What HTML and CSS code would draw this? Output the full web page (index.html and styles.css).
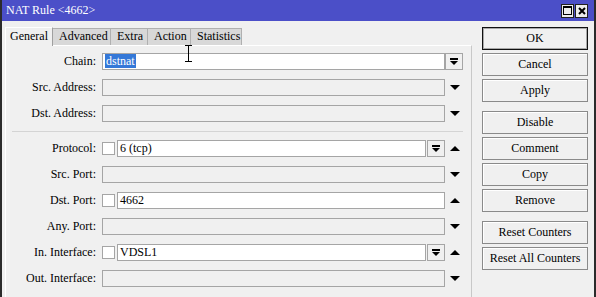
FILE: index.html
```html
<!DOCTYPE html>
<html lang="en">
<head>
    <meta charset="UTF-8">
    <title>NAT Rule &lt;4662&gt;</title>
    <link rel="stylesheet" href="styles.css">
</head>
<body>
    <div class="window">
        <div class="titlebar">
            <span class="title">NAT Rule &lt;4662&gt;</span>
            <div class="title-btns">
                <span class="tbtn">
                    <svg width="9" height="9" viewBox="0 0 9 9"><rect x="0.5" y="0.5" width="8" height="8" fill="none" stroke="#000"/><rect x="0" y="0" width="9" height="2" fill="#000"/></svg>
                </span>
                <span class="tbtn">
                    <svg width="8" height="8" viewBox="0 0 8 8"><path d="M1 1 L7 7 M7 1 L1 7" stroke="#000" stroke-width="2"/></svg>
                </span>
            </div>
        </div>

        <div class="content">
            <div class="main">
                <div class="tabs">
                    <div class="tab active">General</div>
                    <div class="tab">Advanced</div>
                    <div class="tab">Extra</div>
                    <div class="tab">Action</div>
                    <div class="tab">Statistics</div>
                </div>

                <div class="panel">
                    <div class="row">
                        <span class="label">Chain:</span>
                        <div class="field">
                            <div class="box"><span class="selected">dstnat</span></div>
                        </div>
                        <div class="slot">
                            <span class="dd wide"><svg width="8" height="8" viewBox="0 0 8 8"><rect x="0" y="0" width="8" height="2"/><polygon points="0,3 8,3 4,7"/></svg></span>
                        </div>
                    </div>
                    <div class="row">
                        <span class="label">Src. Address:</span>
                        <div class="field"><div class="box off"></div></div>
                        <div class="slot"><svg class="arrow" width="10" height="5" viewBox="0 0 10 5"><polygon points="0,0 10,0 5,5"/></svg></div>
                    </div>
                    <div class="row">
                        <span class="label">Dst. Address:</span>
                        <div class="field"><div class="box off"></div></div>
                        <div class="slot"><svg class="arrow" width="10" height="5" viewBox="0 0 10 5"><polygon points="0,0 10,0 5,5"/></svg></div>
                    </div>

                    <div class="separator"></div>

                    <div class="row">
                        <span class="label">Protocol:</span>
                        <div class="field">
                            <span class="check"></span>
                            <div class="box">6 (tcp)</div>
                            <span class="dd"><svg width="8" height="8" viewBox="0 0 8 8"><rect x="0" y="0" width="8" height="2"/><polygon points="0,3 8,3 4,7"/></svg></span>
                        </div>
                        <div class="slot"><svg class="arrow" width="10" height="5" viewBox="0 0 10 5"><polygon points="5,0 10,5 0,5"/></svg></div>
                    </div>
                    <div class="row">
                        <span class="label">Src. Port:</span>
                        <div class="field"><div class="box off"></div></div>
                        <div class="slot"><svg class="arrow" width="10" height="5" viewBox="0 0 10 5"><polygon points="0,0 10,0 5,5"/></svg></div>
                    </div>
                    <div class="row">
                        <span class="label">Dst. Port:</span>
                        <div class="field">
                            <span class="check"></span>
                            <div class="box">4662</div>
                        </div>
                        <div class="slot"><svg class="arrow" width="10" height="5" viewBox="0 0 10 5"><polygon points="5,0 10,5 0,5"/></svg></div>
                    </div>
                    <div class="row">
                        <span class="label">Any. Port:</span>
                        <div class="field"><div class="box off"></div></div>
                        <div class="slot"><svg class="arrow" width="10" height="5" viewBox="0 0 10 5"><polygon points="0,0 10,0 5,5"/></svg></div>
                    </div>
                    <div class="row">
                        <span class="label">In. Interface:</span>
                        <div class="field">
                            <span class="check"></span>
                            <div class="box">VDSL1</div>
                            <span class="dd"><svg width="8" height="8" viewBox="0 0 8 8"><rect x="0" y="0" width="8" height="2"/><polygon points="0,3 8,3 4,7"/></svg></span>
                        </div>
                        <div class="slot"><svg class="arrow" width="10" height="5" viewBox="0 0 10 5"><polygon points="5,0 10,5 0,5"/></svg></div>
                    </div>
                    <div class="row">
                        <span class="label">Out. Interface:</span>
                        <div class="field"><div class="box off"></div></div>
                        <div class="slot"><svg class="arrow" width="10" height="5" viewBox="0 0 10 5"><polygon points="0,0 10,0 5,5"/></svg></div>
                    </div>
                </div>
            </div>

            <div class="actions">
                <button class="btn default">OK</button>
                <button class="btn">Cancel</button>
                <button class="btn group-end">Apply</button>
                <button class="btn">Disable</button>
                <button class="btn">Comment</button>
                <button class="btn">Copy</button>
                <button class="btn group-end">Remove</button>
                <button class="btn">Reset Counters</button>
                <button class="btn">Reset All Counters</button>
            </div>
        </div>

        <!-- mouse pointer over the form -->
        <svg class="ibeam" width="9" height="17" viewBox="0 0 9 17">
            <path d="M1 0.5 H8 M4.5 0.5 V16.5 M1 16.5 H8" stroke="#000" stroke-width="1" fill="none"/>
        </svg>
    </div>
</body>
</html>
```

FILE: styles.css
```css
* {
    margin: 0;
    padding: 0;
    box-sizing: border-box;
}

body {
    font-family: "Liberation Serif", "DejaVu Serif", serif;
    font-size: 12px;
    color: #000;
    background: #f0f0f0;
}

.window {
    position: relative;
    width: 596px;
    height: 297px;
    overflow: hidden;
    background: #f0f0f0;
    border-left: 2px solid #2b2b2b;
    border-right: 2px solid #2b2b2b;
}

.titlebar {
    height: 21px;
    background: #4b4fc8;
    color: #fff;
    display: flex;
    align-items: center;
    justify-content: space-between;
    padding-left: 4px;
    padding-right: 6px;
}

.title {
    font-size: 12px;
}

.title-btns {
    display: flex;
    gap: 1px;
}

.tbtn {
    width: 13px;
    height: 14px;
    background: #ececec;
    border: 1px solid #202020;
    display: flex;
    align-items: center;
    justify-content: center;
}

.content {
    display: flex;
    padding-left: 3px;
}

.main {
    width: 467px;
}

.tabs {
    height: 24px;
    display: flex;
    align-items: flex-end;
}

.tab {
    height: 17px;
    line-height: 15px;
    padding: 0 6px;
    background: #d8d8d8;
    border: 1px solid #b0b0b0;
    border-bottom: none;
    margin-left: -1px;
}

.tab.active {
    height: 19px;
    line-height: 17px;
    width: 48px;
    padding: 0 0 0 4px;
    margin-left: 0;
    background: #f0f0f0;
    border-color: #fff #a0a0a0 #f0f0f0 #fff;
    position: relative;
    z-index: 1;
    margin-bottom: -1px;
}

.tab:nth-child(2) { width: 59px; }
.tab:nth-child(3) { width: 38px; }
.tab:nth-child(4) { width: 44px; }
.tab:nth-child(5) { width: 52px; }

.panel {
    height: 270px;
    border-left: 1px solid #fff;
    border-top: 1px solid #fff;
    border-right: 1px solid #c8c8c8;
    padding-top: 7px;
}

.row {
    display: flex;
    align-items: center;
    height: 17px;
    margin-bottom: 9px;
}

.label {
    width: 90px;
    margin-right: 6px;
    text-align: right;
    white-space: nowrap;
}

.field {
    width: 343px;
    height: 17px;
    display: flex;
}

.box {
    flex: 1;
    height: 17px;
    background: #fff;
    border: 1px solid #a5a5a5;
    padding-left: 2px;
    line-height: 15px;
    white-space: nowrap;
}

.box.off {
    background: #f0f0f0;
}

.selected {
    background: #3478d8;
    color: #fff;
    padding: 0 1px;
}

.check {
    width: 13px;
    height: 13px;
    margin: 2px 2px 0 0;
    background: #fff;
    border: 1px solid #a5a5a5;
}

.dd {
    width: 18px;
    height: 17px;
    margin-left: 1px;
    border: 1px solid #a5a5a5;
    background: #f0f0f0;
    display: flex;
    align-items: center;
    justify-content: center;
}

.dd.wide {
    margin-left: 0;
}

.slot {
    width: 18px;
    display: flex;
    align-items: center;
}

.arrow {
    margin-left: 5px;
}

.separator {
    height: 1px;
    width: 451px;
    margin: 0 0 8px 6px;
    background: #d4d4d4;
}

.actions {
    margin-left: 10px;
    padding-top: 6px;
    display: flex;
    flex-direction: column;
}

.btn {
    width: 106px;
    height: 23px;
    margin-bottom: 3px;
    font-family: "Liberation Serif", "DejaVu Serif", serif;
    font-size: 12px;
    color: #000;
    background: #f0f0f0;
    border: 1px solid #8a8a8a;
    box-shadow: inset 1px 1px 0 #fff;
}

.btn.default {
    border-color: #101010;
    box-shadow: inset 0 0 0 1px #a8a8a8;
}

.btn.group-end {
    margin-bottom: 9px;
}

.ibeam {
    position: absolute;
    left: 182px;
    top: 45px;
}
```
